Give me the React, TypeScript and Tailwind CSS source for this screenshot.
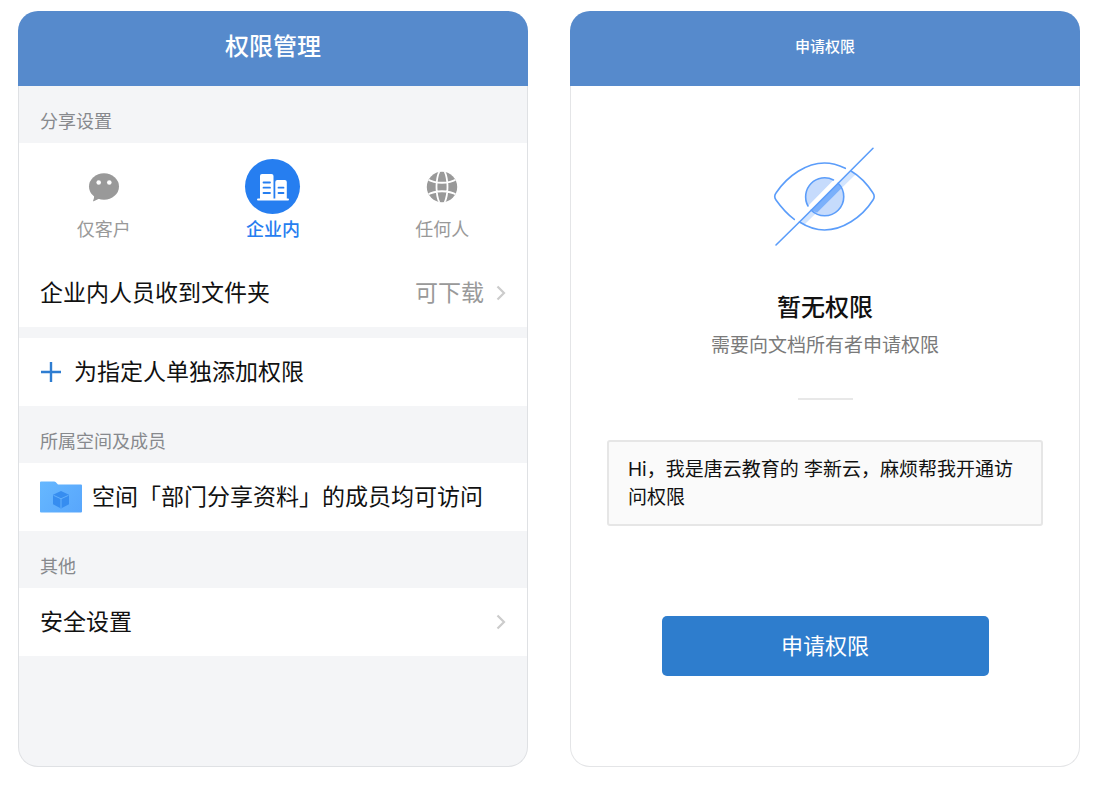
import { useState } from "react";
import type { ReactNode } from "react";

const WechatIcon = () => (
  <svg width="32" height="32" viewBox="0 0 32 32" fill="none" aria-hidden="true">
    <ellipse cx="16" cy="15.500" rx="15" ry="13.200" fill="#999999" />
    <path d="M6 24c.3 2-.1 4-.9 5.700-.2.500.2.700.6.500l6.300-3z" fill="#999999" />
    <circle cx="10.700" cy="11.500" r="2.300" fill="#fff" />
    <circle cx="21.300" cy="11.500" r="2.300" fill="#fff" />
  </svg>
);

const BuildingIcon = () => (
  <svg width="32" height="28" viewBox="0 0 32 28" fill="none" aria-hidden="true">
    <path d="M3 26V3a2 2 0 0 1 2-2h9.500a2 2 0 0 1 2 2v23z" fill="#fff" />
    <path d="M18.300 26V9a2 2 0 0 1 2-2h7.500a2 2 0 0 1 2 2v17z" fill="#fff" />
    <rect x="0" y="25.500" width="32" height="2" rx="1" fill="#fff" />
    <path
      d="M6.500 9.500h6.500M6.500 14.700h6.500M6.500 20h6.500M21.500 14.700h5M21.500 20h5"
      stroke="#267ef0"
      strokeWidth="1.800"
      strokeLinecap="round"
    />
  </svg>
);

const GlobeIcon = () => (
  <svg width="32" height="32" viewBox="0 0 32 32" fill="none" aria-hidden="true">
    <clipPath id="globe">
      <circle cx="16" cy="16" r="15.200" />
    </clipPath>
    <g clipPath="url(#globe)">
      <rect width="32" height="32" fill="#999999" />
      <path
        d="M13.500 0C9.500 9 9.500 23 13.500 32M18.500 0c4 9 4 23 0 32M1 8c8.500 5 21.500 5 30 0M1 24c8.500-5 21.500-5 30 0"
        stroke="#fff"
        strokeWidth="1.800"
      />
    </g>
  </svg>
);

const FolderIcon = () => (
  <svg width="42" height="32" viewBox="0 0 42 32" fill="none" aria-hidden="true">
    <defs>
      <linearGradient id="folder" x1="0" y1="0" x2="42" y2="32" gradientUnits="userSpaceOnUse">
        <stop stopColor="#66b8ff" />
        <stop offset="1" stopColor="#58a6fc" />
      </linearGradient>
    </defs>
    <path
      d="M0 1.500A1 1 0 0 1 1 .5h13.200c.6 0 1 .2 1.400.6l2.400 2.400h23a1 1 0 0 1 1 1v26a1 1 0 0 1-1 1H1a1 1 0 0 1-1-1z"
      fill="url(#folder)"
    />
    <path d="M21 10l8 3.800v9.400L21 27.500l-8-4.300v-9.400z" fill="#368df0" />
    <path d="M13.500 14.300L21 17.800l7.500-3.500M21 17.800V27" stroke="#62b0fb" strokeWidth="1" />
  </svg>
);

const HiddenEye = () => (
  <svg width="106" height="102" viewBox="22 16 106 102" fill="none" aria-hidden="true">
    <path d="M58 76A19 19 0 0 1 83.500 50z" fill="#c6dbfc" />
    <path d="M88.200 53.300A19 19 0 0 1 61.200 80.200z" fill="#c6dbfc" />
    <path d="M101 41l5 3L54.500 94.500l-5-2.500z" fill="#4e96fa" fillOpacity="0.250" />
    <path d="M88.200 53.300l3 5.300L67.300 82.500l-6.100-2.300z" fill="#4e96fa" fillOpacity="0.500" />
    <g stroke="#5b9dfa" strokeWidth="1.600" strokeLinecap="round">
      <path d="M26 115L53 88.500 123 18.300" />
      <path d="M58 76A19 19 0 0 1 83.500 50" />
      <path d="M88.200 53.300A19 19 0 0 1 61.200 80.200" />
      <path d="M44.300 89.400C37 84 31 77 26 70c-1.800-2.500-1.800-4.500 0-7C38 45 57 33 74.500 33c7 0 14 2 20.800 5.300" />
      <path d="M101 41c8.500 5 16.500 13.500 22 22 1.700 2.500 1.700 4.500 0 7-11.500 18-31 30-48.500 30-8.500 0-17-3-25-8" />
    </g>
  </svg>
);

const Chevron = () => (
  <svg width="10" height="16" viewBox="0 0 10 16" fill="none" aria-hidden="true">
    <path d="M1.500 1.500L8 8l-6.500 6.500" stroke="#cccccc" strokeWidth="2.200" />
  </svg>
);

const SectionLabel = ({ children }: { children: ReactNode }) => (
  <h2 className="px-[21px] pt-6 pb-[9px] text-lg leading-6 text-[#87898d]">{children}</h2>
);

const Row = ({ children }: { children: ReactNode }) => (
  <button type="button" className="flex h-[68px] w-full items-center bg-white px-[21px] text-left text-[23px] leading-8">
    {children}
  </button>
);

const scopes = [
  { id: "customer", label: "仅客户", icon: WechatIcon },
  { id: "company", label: "企业内", icon: BuildingIcon },
  { id: "anyone", label: "任何人", icon: GlobeIcon },
];

const ShareSettings = () => {
  const [scope, setScope] = useState("company");

  return (
    <section className="flex flex-col">
      <header className="flex h-[75px] items-center justify-center rounded-t-[20px] bg-[#568acc] pb-1">
        <h1 className="text-2xl font-medium text-white">权限管理</h1>
      </header>
      <div className="grow overflow-hidden rounded-b-[20px] border border-t-0 border-[#dfe1e4] bg-[#f4f5f7]">
        <SectionLabel>分享设置</SectionLabel>
        <div className="grid grid-cols-3 bg-white pt-4 pb-[17px]">
          {scopes.map((item) => (
            <button
              key={item.id}
              type="button"
              aria-pressed={scope === item.id}
              onClick={() => setScope(item.id)}
              className="flex flex-col items-center gap-1"
            >
              <span
                className={`flex size-[55px] items-center justify-center rounded-full ${scope === item.id ? "bg-[#267ef0]" : ""}`}
              >
                <item.icon />
              </span>
              <span className={`text-lg leading-6 ${scope === item.id ? "font-medium text-[#267ef0]" : "text-[#999999]"}`}>
                {item.label}
              </span>
            </button>
          ))}
        </div>
        <Row>
          <span className="grow">企业内人员收到文件夹</span>
          <span className="mr-3 text-[#999999]">可下载</span>
          <Chevron />
        </Row>
        <div className="mt-[11px]">
          <Row>
            <svg width="22" height="22" viewBox="0 0 22 22" className="mr-3" aria-hidden="true">
              <path d="M11 1v20M1 11h20" stroke="#2e7dd1" strokeWidth="2.400" />
            </svg>
            <span>为指定人单独添加权限</span>
          </Row>
        </div>
        <SectionLabel>所属空间及成员</SectionLabel>
        <Row>
          <FolderIcon />
          <span className="ml-[10px]">空间「部门分享资料」的成员均可访问</span>
        </Row>
        <SectionLabel>其他</SectionLabel>
        <Row>
          <span className="grow">安全设置</span>
          <Chevron />
        </Row>
      </div>
    </section>
  );
};

const RequestAccess = () => {
  const [message, setMessage] = useState("Hi，我是唐云教育的 李新云，麻烦帮我开通访问权限");

  return (
    <section className="flex flex-col">
      <header className="flex h-[75px] items-center justify-center rounded-t-[20px] bg-[#568acc] pb-[2px]">
        <h1 className="text-[15px] font-medium text-white">申请权限</h1>
      </header>
      <div className="flex grow flex-col items-center rounded-b-[20px] border border-t-0 border-[#e4e5e7] px-9 pt-[60px] pb-[90px]">
        <HiddenEye />
        <h2 className="mt-11 text-2xl font-medium">暂无权限</h2>
        <p className="mt-2 text-[19px] leading-7 text-[#7a7a7a]">需要向文档所有者申请权限</p>
        <div className="mt-[38px] h-[2px] w-[55px] bg-[#e8e8e8]" />
        <textarea
          aria-label="申请说明"
          rows={2}
          value={message}
          onChange={(e) => setMessage(e.target.value)}
          className="mt-10 block w-full resize-none overflow-hidden rounded-[3px] border-2 border-[#e6e6e6] bg-[#fafafa] px-[19px] pt-[14px] pb-3 text-[19px] leading-7"
        />
        <button type="button" className="mt-[90px] h-[60px] w-3/4 rounded-[5px] bg-[#2e7dcd] text-[22px] text-white">
          申请权限
        </button>
      </div>
    </section>
  );
};

const App = () => (
  <main className="grid min-h-screen grid-cols-2 gap-[42px] bg-white pt-[11px] pr-[22px] pb-[21px] pl-[18px] font-['Inter','Noto_Sans_CJK_SC',sans-serif] text-[#111111]">
    <ShareSettings />
    <RequestAccess />
  </main>
);

export default App;
